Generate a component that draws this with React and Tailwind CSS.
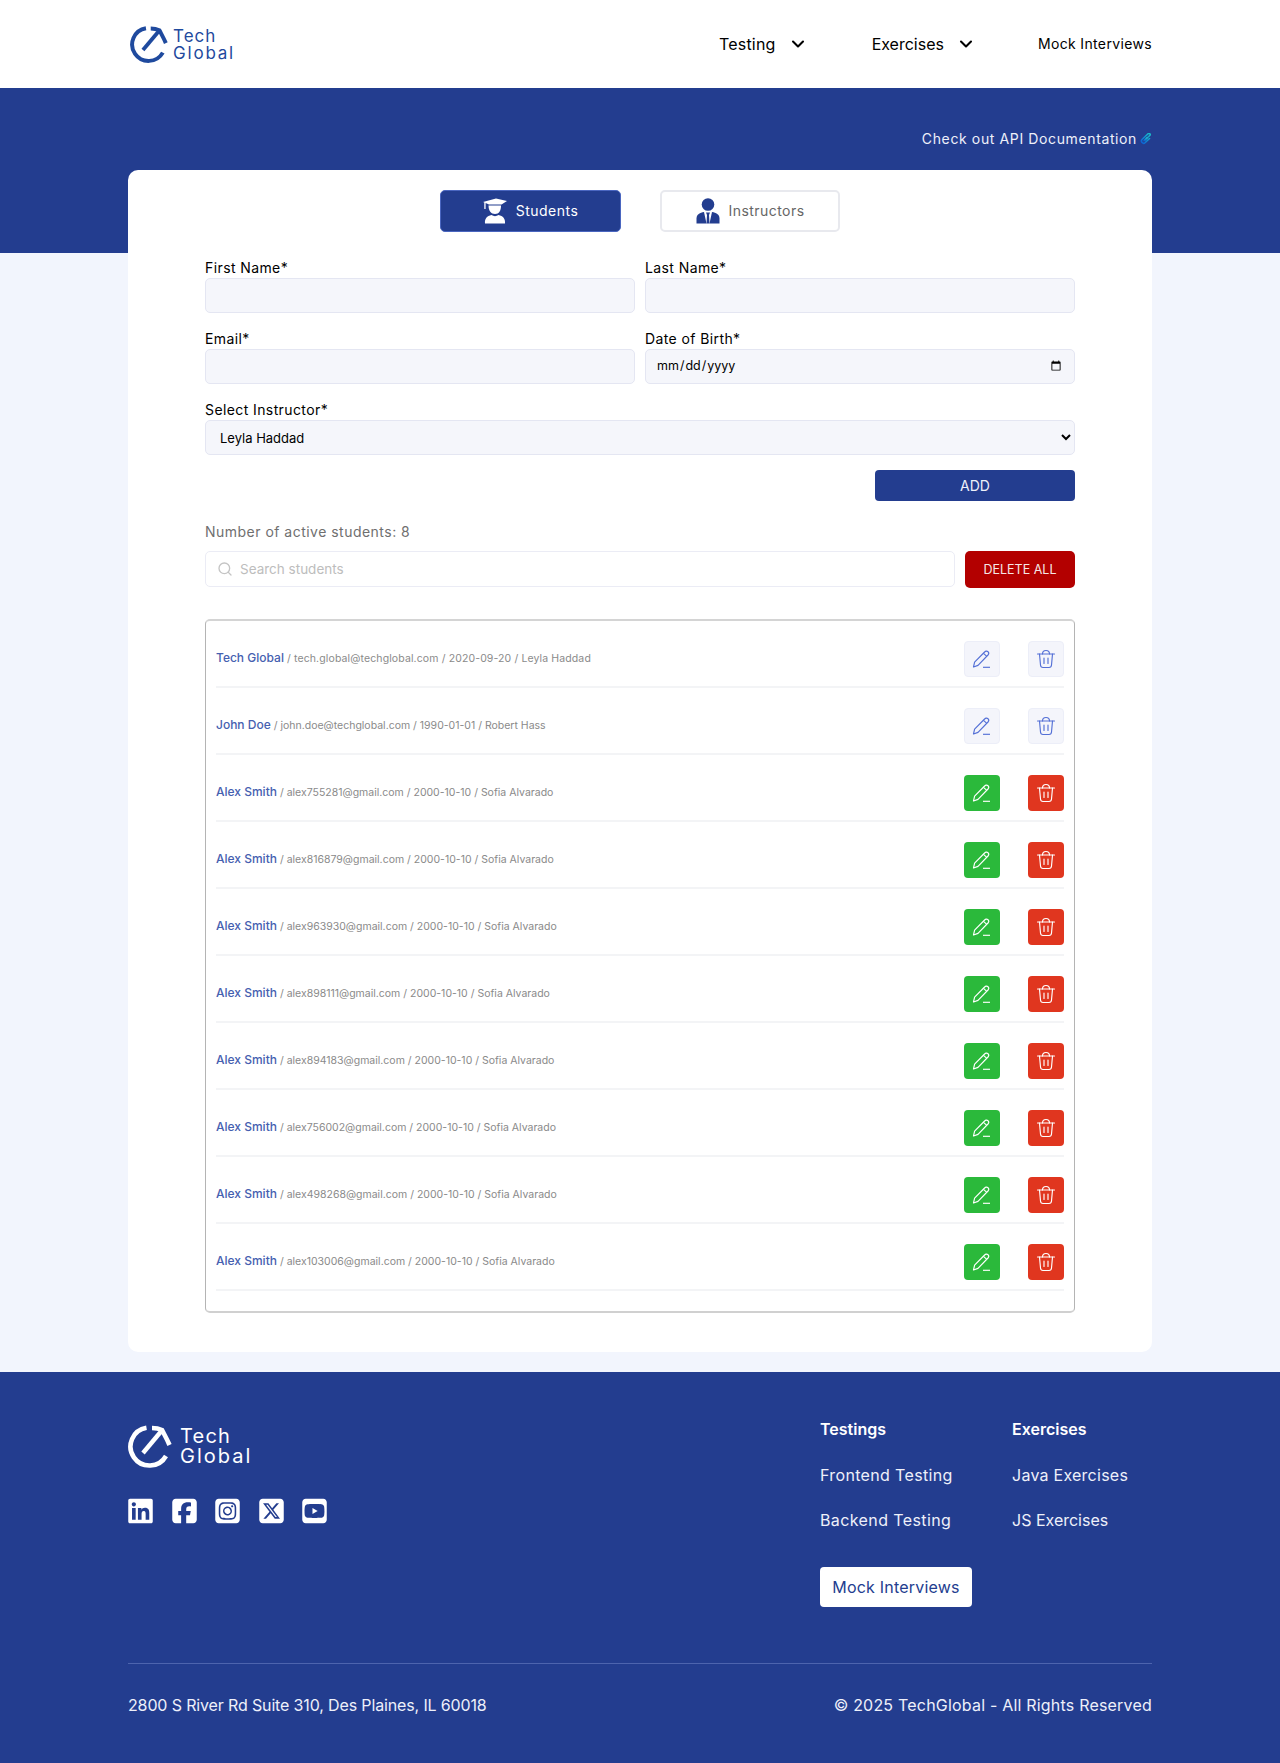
import { FaLinkedin, FaSquareFacebook, FaSquareInstagram, FaSquareXTwitter, FaSquareYoutube } from "react-icons/fa6";
import { ChevronDown, Search } from "lucide-react";

const students = [
  { name: "Tech Global", rest: "tech.global@techglobal.com / 2020-09-20 / Leyla Haddad", locked: true, spacing: "tracking-[0.12px]" },
  { name: "John Doe", rest: "john.doe@techglobal.com / 1990-01-01 / Robert Hass", locked: true },
  { name: "Alex Smith", rest: "alex755281@gmail.com / 2000-10-10 / Sofia Alvarado" },
  { name: "Alex Smith", rest: "alex816879@gmail.com / 2000-10-10 / Sofia Alvarado" },
  { name: "Alex Smith", rest: "alex963930@gmail.com / 2000-10-10 / Sofia Alvarado" },
  { name: "Alex Smith", rest: "alex898111@gmail.com / 2000-10-10 / Sofia Alvarado" },
  { name: "Alex Smith", rest: "alex894183@gmail.com / 2000-10-10 / Sofia Alvarado" },
  { name: "Alex Smith", rest: "alex756002@gmail.com / 2000-10-10 / Sofia Alvarado" },
  { name: "Alex Smith", rest: "alex498268@gmail.com / 2000-10-10 / Sofia Alvarado" },
  { name: "Alex Smith", rest: "alex103006@gmail.com / 2000-10-10 / Sofia Alvarado" },
];

function LogoMark({ className }) {
  return (
    <svg viewBox="0 0 44 44" className={className} fill="none" stroke="currentColor" strokeWidth="4.6">
      <path d="M18.5 3.8 A19 19 0 1 0 38 32" />
      <path d="M24 4 C27 4 31 4.6 34 6 C36 10 39 15 41.5 21" />
      <path d="M15 29 L33 7.5" strokeWidth="4.4" />
    </svg>
  );
}

function PencilIcon() {
  return (
    <svg viewBox="0 0 20 20" className="h-5 w-5" fill="none" stroke="currentColor" strokeWidth="1.15" strokeLinejoin="round">
      <path d="M1.5 18 L2.6 13.2 L12.6 3 C13.5 2 15 1.8 16 2.7 C17 3.7 16.9 5 16 6 L6 16.4 Z" />
      <path d="M11.5 4.3 L14.8 7.4" />
      <path d="M11 18.3 H18" />
    </svg>
  );
}

function TrashIcon() {
  return (
    <svg viewBox="0 0 20 20" className="h-5 w-5" fill="none" stroke="currentColor" strokeWidth="1.15" strokeLinecap="round" strokeLinejoin="round">
      <path d="M1.5 5 H18.5" />
      <path d="M6.5 5 C6.5 2.5 7.5 1.5 10 1.5 C12.5 1.5 13.5 2.5 13.5 5" />
      <path d="M3.5 5 L4.5 16 C4.6 17.6 5.6 18.5 7 18.5 H13 C14.4 18.5 15.4 17.6 15.5 16 L16.5 5" />
      <path d="M8 9 V14.5 M12 9 V14.5" />
    </svg>
  );
}

function StudentIcon() {
  return (
    <svg viewBox="0 0 24 26" className="h-[26px] w-6" fill="white">
      <path d="M0 4 L13 0.5 L24 3 L18.5 6.5 H6 L2.6 5 V11 H1.3 V4.6 Z" />
      <path d="M5.5 7.5 H18 C18 12.5 16 16 12 16 C8 16 5.5 12.5 5.5 7.5 Z" />
      <path d="M2 25.5 C1.5 20.5 4 18 8.5 17 C10.5 18.5 13.5 18.5 15.5 17 C20 18 22.5 20.5 22 25.5 Z" />
    </svg>
  );
}

function TeacherIcon() {
  return (
    <svg viewBox="0 0 24 26" className="h-[26px] w-6" fill="#233d8f">
      <circle cx="12" cy="6.5" r="6.3" />
      <path d="M0.5 25.5 V20.5 C0.5 16.5 4 14.5 8 14 L10.5 25.5 Z" />
      <path d="M23.5 25.5 V20.5 C23.5 16.5 20 14.5 16 14 L13.5 25.5 Z" />
      <path d="M10 14.5 H14 L13 17 L13.5 25.5 H10.5 L11 17 Z" />
    </svg>
  );
}

function LinkIcon() {
  return (
    <svg viewBox="0 0 24 24" className="h-3 w-3" fill="none" strokeWidth="3.2" strokeLinecap="round">
      <defs>
        <linearGradient id="linkGrad" x1="0" y1="1" x2="1" y2="0">
          <stop offset="0" stopColor="#0b5fd8" />
          <stop offset="1" stopColor="#19c2c8" />
        </linearGradient>
      </defs>
      <path stroke="url(#linkGrad)" d="M10 14 L20 4.5 C22 2.5 17.5 -0.5 15.5 2 L4 13 C0.5 17 6 23 10 19.5 L19 11" />
      <path stroke="url(#linkGrad)" d="M14 9.5 L8 15.5" />
    </svg>
  );
}

function Field({ label, type = "text", placeholder }) {
  return (
    <div>
      <label className="block h-[21px] text-sm leading-[21px] tracking-[0.4px] text-black">{label}</label>
      <input
        type={type}
        placeholder={placeholder}
        className="h-[35px] w-full rounded-[5px] border border-[#e4e6f2] bg-[#f5f6fb] px-[10px] text-[12.5px] text-black outline-none"
      />
    </div>
  );
}

function StudentRow({ student }) {
  const editClass = student.locked
    ? "border border-[#eceef8] bg-[#f4f5fb] text-[#5470d6]"
    : "bg-[#2bb93b] text-white";
  const deleteClass = student.locked
    ? "border border-[#eceef8] bg-[#f4f5fb] text-[#5470d6]"
    : "bg-[#e0361f] text-white";

  return (
    <div className="flex items-center justify-between border-b-2 border-[#f3f4f6] pt-5 pb-[9px]">
      <p className={`pb-[2px] text-[10.5px] text-[#8a8a8a] ${student.spacing || ""}`}>
        <span className="text-[12px] font-medium tracking-normal text-[#4560b0]">{student.name}</span> / {student.rest}
      </p>
      <div className="flex gap-7">
        <button type="button" className={`flex h-9 w-9 items-center justify-center rounded-[4px] ${editClass}`}>
          <PencilIcon />
        </button>
        <button type="button" className={`flex h-9 w-9 items-center justify-center rounded-[4px] ${deleteClass}`}>
          <TrashIcon />
        </button>
      </div>
    </div>
  );
}

export default function App() {
  return (
    <div className="min-h-[1763px] bg-[#f2f5fd] font-['Inter','Liberation_Sans',sans-serif]">
      {/* HEADER */}
      <header className="h-[88px] bg-white">
        <div className="mx-auto flex h-full w-[1024px] items-center justify-between pl-[2px]">
          <div className="flex items-center gap-[5px] text-[#1f4a9e]">
            <LogoMark className="h-[38px] w-[38px]" />
            <div className="pt-[1px] text-[17px] leading-[17px]">
              <span className="block tracking-[1px]">Tech</span>
              <span className="block tracking-[1.8px]">Global</span>
            </div>
          </div>
          <nav className="flex items-center text-black">
            <span className="text-base tracking-[0.2px]">Testing</span>
            <ChevronDown className="ml-[12px] h-5 w-5" strokeWidth={2.5} />
            <span className="ml-[64px] text-base">Exercises</span>
            <ChevronDown className="ml-[12px] h-5 w-5" strokeWidth={2.5} />
            <span className="ml-[62px] text-sm tracking-[0.35px]">Mock Interviews</span>
          </nav>
        </div>
      </header>

      {/* BLUE BAND */}
      <div className="h-[165px] bg-[#233d8f]">
        <div className="mx-auto flex w-[1024px] items-center justify-end gap-[3px] pt-[41px] text-sm tracking-[0.62px] text-[#eef0fa]">
          Check out API Documentation
          <LinkIcon />
        </div>
      </div>

      {/* CARD */}
      <main className="relative mx-auto -mt-[83px] h-[1182px] w-[1024px] rounded-[10px] bg-white px-[77px] pt-5">
        <div className="flex justify-center gap-[39px]">
          <button type="button" className="flex h-[42px] w-[181px] items-center justify-center gap-[9px] rounded-[5px] border border-[#4a66c0] bg-[#233d8f] text-sm tracking-[0.5px] text-white">
            <StudentIcon />
            Students
          </button>
          <button type="button" className="flex h-[42px] w-[180px] items-center justify-center gap-[9px] rounded-[5px] border-2 border-[#e8e9ee] bg-white text-sm tracking-[0.45px] text-[#666]">
            <TeacherIcon />
            Instructors
          </button>
        </div>

        <div className="mt-[25px] grid grid-cols-2 gap-x-[10px] gap-y-[15px]">
          <Field label="First Name*" />
          <Field label="Last Name*" />
          <Field label="Email*" />
          <Field label="Date of Birth*" type="date" />
          <div className="col-span-2">
            <label className="block h-[21px] text-sm leading-[21px] tracking-[0.4px] text-black">Select Instructor*</label>
            <select className="h-[35px] w-full rounded-[5px] border border-[#e4e6f2] bg-[#f5f6fb] px-[10px] text-[13px] text-black outline-none">
              <option>Leyla Haddad</option>
            </select>
          </div>
        </div>

        <div className="mt-[15px] flex justify-end">
          <button type="button" className="h-[31px] w-[200px] rounded-[4px] bg-[#233d8f] text-sm text-[#eef0fa]">ADD</button>
        </div>

        <p className="mt-[21px] text-sm tracking-[0.48px] text-[#6f6f6f]">Number of active students: 8</p>

        <div className="mt-[9px] flex gap-[10px]">
          <div className="flex h-[36px] flex-1 items-center gap-[7px] rounded-[5px] border border-[#ebecf5] bg-white px-[11px]">
            <Search className="h-4 w-4 text-[#c4c4c4]" />
            <input placeholder="Search students" className="flex-1 bg-transparent pt-[1px] text-[13.5px] outline-none placeholder:text-[#bdbdbd]" />
          </div>
          <button type="button" className="h-[37px] w-[110px] rounded-[5px] bg-[#b30000] pt-[2px] text-[12.5px] text-[#f6e6e6]">DELETE ALL</button>
        </div>

        <div className="mt-[31px] rounded-[5px] border border-t-2 border-[#b4b4b4] border-t-[#d4d4d4] border-b-2 border-b-[#d0d0d0] px-[10px] pb-5">
          {students.map((student, i) => (
            <StudentRow key={i} student={student} />
          ))}
        </div>
      </main>

      {/* FOOTER */}
      <footer className="mt-5 h-[391px] bg-[#233d8f] text-white">
        <div className="mx-auto w-[1024px]">
          <div className="flex h-[292px] justify-between border-b border-[#4d64ae]">
            <div className="pt-[52px]">
              <div className="flex items-center gap-[8px]">
                <LogoMark className="h-[44px] w-[44px]" />
                <div className="text-[20px] leading-[20px]">
                  <span className="block tracking-[1.2px]">Tech</span>
                  <span className="block tracking-[2px]">Global</span>
                </div>
              </div>
              <div className="mt-[29px] flex gap-[18.5px]">
                <FaLinkedin className="h-7 w-[25px]" />
                <FaSquareFacebook className="h-7 w-[25px]" />
                <FaSquareInstagram className="h-7 w-[25px]" />
                <FaSquareXTwitter className="h-7 w-[25px]" />
                <FaSquareYoutube className="h-7 w-[25px]" />
              </div>
            </div>
            <div className="grid w-[332px] grid-cols-[192px_140px] pt-[45px] text-base text-[#eef0fa]">
              <div className="flex flex-col gap-[21px] leading-[24px]">
                <span className="mb-[1px] font-semibold text-white">Testings</span>
                <span className="tracking-[0.35px]">Frontend Testing</span>
                <span className="tracking-[0.4px]">Backend Testing</span>
                <span className="mt-[14px] flex h-[40px] w-[152px] items-center justify-center rounded-[4px] bg-white tracking-[0.2px] text-[#233d8f]">Mock Interviews</span>
              </div>
              <div className="flex flex-col gap-[21px] leading-[24px]">
                <span className="mb-[1px] font-semibold text-white">Exercises</span>
                <span className="tracking-[0.25px]">Java Exercises</span>
                <span>JS Exercises</span>
              </div>
            </div>
          </div>
          <div className="flex justify-between pt-[29px] text-base text-[#eef0fa]">
            <span className="tracking-[-0.14px]">2800 S River Rd Suite 310, Des Plaines, IL 60018</span>
            <span className="tracking-[0.2px]">© 2025 TechGlobal - All Rights Reserved</span>
          </div>
        </div>
      </footer>
    </div>
  );
}
